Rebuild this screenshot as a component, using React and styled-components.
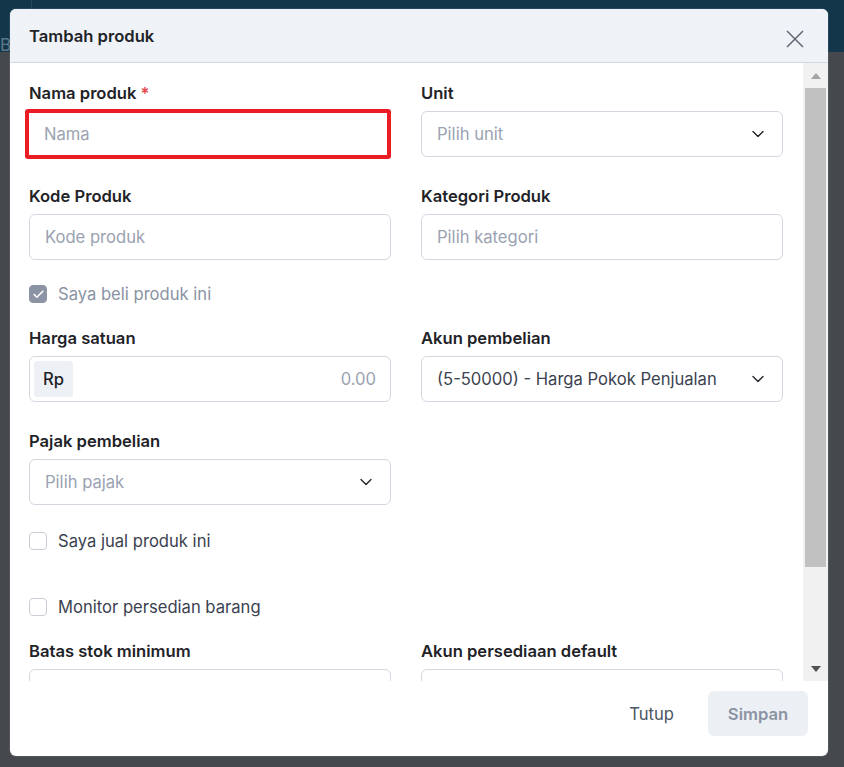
import React from "react";
import styled, { createGlobalStyle } from "styled-components";
import { ChevronDown, Check } from "lucide-react";

const GlobalStyle = createGlobalStyle`
  * { box-sizing: border-box; }
  html, body { margin: 0; padding: 0; }
  body {
    font-family: Inter, "Noto Sans", sans-serif;
    background: #45484c;
  }
`;

function App() {
  return (
    <Page>
      <GlobalStyle />
      <TopBar>
        <TopCell>Bi</TopCell>
      </TopBar>
      <Backdrop />

      <Modal>
        <Header>
          <Title>Tambah produk</Title>
          <CloseButton aria-label="close">
            <svg width="18" height="18" viewBox="0 0 18 18">
              <path d="M1 1L17 17M17 1L1 17" stroke="#5f6672" strokeWidth="1.5" fill="none" />
            </svg>
          </CloseButton>
        </Header>

        <Body>
          <Content>
            <Row>
              <Field>
                <Label>
                  Nama produk <Required>*</Required>
                </Label>
                <NameInput>Nama</NameInput>
              </Field>
              <Field>
                <Label>Unit</Label>
                <Select>
                  <span>Pilih unit</span>
                  <ChevronDown size={20} strokeWidth={1.6} color="#1f2328" />
                </Select>
              </Field>
            </Row>

            <Row $top={29}>
              <Field>
                <Label>Kode Produk</Label>
                <Input>Kode produk</Input>
              </Field>
              <Field>
                <Label>Kategori Produk</Label>
                <Input>Pilih kategori</Input>
              </Field>
            </Row>

            <CheckRow $top={24} $muted>
              <CheckBox $checked>
                <Check size={13} strokeWidth={3} color="#fff" />
              </CheckBox>
              Saya beli produk ini
            </CheckRow>

            <Row $top={24}>
              <Field>
                <Label>Harga satuan</Label>
                <PriceInput>
                  <Prefix>Rp</Prefix>
                  <span>0.00</span>
                </PriceInput>
              </Field>
              <Field>
                <Label>Akun pembelian</Label>
                <Select $filled>
                  <span>(5-50000) - Harga Pokok Penjualan</span>
                  <ChevronDown size={20} strokeWidth={1.6} color="#1f2328" />
                </Select>
              </Field>
            </Row>

            <Row $top={29}>
              <Field>
                <Label>Pajak pembelian</Label>
                <Select>
                  <span>Pilih pajak</span>
                  <ChevronDown size={20} strokeWidth={1.6} color="#1f2328" />
                </Select>
              </Field>
            </Row>

            <CheckRow $top={26}>
              <CheckBox />
              Saya jual produk ini
            </CheckRow>

            <CheckRow $top={46}>
              <CheckBox />
              Monitor persedian barang
            </CheckRow>

            <Row $top={24}>
              <Field>
                <Label>Batas stok minimum</Label>
                <Input />
              </Field>
              <Field>
                <Label>Akun persediaan default</Label>
                <Input />
              </Field>
            </Row>
          </Content>

          <ScrollBar>
            <ArrowButton>
              <ArrowUp />
            </ArrowButton>
            <Track>
              <Thumb />
            </Track>
            <ArrowButton>
              <ArrowDown />
            </ArrowButton>
          </ScrollBar>
        </Body>

        <Footer>
          <TextButton>Tutup</TextButton>
          <SaveButton>Simpan</SaveButton>
        </Footer>
      </Modal>
    </Page>
  );
}

export default App;

const Page = styled.div`
  position: relative;
  width: 844px;
  height: 767px;
  overflow: hidden;
  background: #45484c;
  display: flex;
  flex-direction: column;
`;

const TopBar = styled.div`
  height: 52px;
  background: #13364a;
  display: flex;
`;

const TopCell = styled.div`
  width: 32px;
  border-right: 1px solid #24495e;
  color: #5d7686;
  font-size: 17px;
  padding-top: 36px;
  line-height: 18px;
  overflow: hidden;
`;

const Backdrop = styled.div`
  flex: 1;
  background: #45484c;
`;

const Modal = styled.div`
  position: absolute;
  left: 10px;
  top: 9px;
  width: 818px;
  height: 747px;
  background: #fff;
  border-radius: 6px;
  overflow: hidden;
  display: flex;
  flex-direction: column;
  box-shadow: 0 0 0 1px rgba(255, 255, 255, 0.08);
`;

const Header = styled.div`
  height: 54px;
  flex-shrink: 0;
  display: flex;
  align-items: center;
  justify-content: space-between;
  padding: 0 24px 0 19px;
  background: #eff3f8;
  border-bottom: 1px solid #d3d9e1;
`;

const Title = styled.div`
  font-size: 16.6px;
  font-weight: 600;
  color: #1f2328;
`;

const CloseButton = styled.button`
  border: none;
  background: none;
  padding: 0;
  display: flex;
  margin-top: 6px;
`;

const Body = styled.div`
  flex: 1;
  display: flex;
  min-height: 0;
`;

const Content = styled.div`
  flex: 1;
  overflow: hidden;
  padding: 20px 20px 0 19px;
`;

const Row = styled.div`
  display: grid;
  grid-template-columns: 362px 362px;
  column-gap: 30px;
  margin-top: ${(p) => p.$top || 0}px;
`;

const Field = styled.div`
  display: flex;
  flex-direction: column;
`;

const Label = styled.div`
  font-size: 16.6px;
  line-height: 20px;
  font-weight: 600;
  color: #1f2328;
  margin-bottom: 8px;
`;

const Required = styled.span`
  color: #e5484d;
`;

const Input = styled.div`
  height: 46px;
  border: 1px solid #d3d8e0;
  border-radius: 6px;
  padding: 0 15px;
  display: flex;
  align-items: center;
  font-size: 16.6px;
  color: #9aa2b1;
`;

const NameInput = styled(Input)`
  height: 50px;
  margin: -2px 0 -2px -4px;
  border: 4px solid #ec1c24;
  border-radius: 3px;
  padding-left: 15px;
`;

const Select = styled(Input)`
  justify-content: space-between;
  padding-right: 14px;
  color: ${(p) => (p.$filled ? "#3b4250" : "#9aa2b1")};
`;

const PriceInput = styled(Input)`
  justify-content: space-between;
  padding: 4px 14px 4px 4px;
`;

const Prefix = styled.div`
  width: 39px;
  height: 36px;
  border-radius: 3px;
  background: #edf0f4;
  color: #1f2328;
  font-weight: 500;
  display: flex;
  align-items: center;
  padding-left: 9px;
`;

const CheckRow = styled.div`
  display: flex;
  align-items: center;
  gap: 11px;
  height: 20px;
  margin-top: ${(p) => p.$top || 0}px;
  font-size: 16.6px;
  color: ${(p) => (p.$muted ? "#8a93a3" : "#3b4250")};
`;

const CheckBox = styled.div`
  width: 18px;
  height: 18px;
  border-radius: 4px;
  display: flex;
  align-items: center;
  justify-content: center;
  background: ${(p) => (p.$checked ? "#8b93a4" : "#fff")};
  border: 1px solid ${(p) => (p.$checked ? "#8b93a4" : "#c9ced6")};
`;

const ScrollBar = styled.div`
  width: 25px;
  flex-shrink: 0;
  background: #f1f1f1;
  display: flex;
  flex-direction: column;
`;

const ArrowButton = styled.div`
  height: 25px;
  display: flex;
  align-items: center;
  justify-content: center;
`;

const ArrowUp = styled.div`
  width: 0;
  height: 0;
  border-left: 5px solid transparent;
  border-right: 5px solid transparent;
  border-bottom: 6px solid #a3a3a3;
`;

const ArrowDown = styled.div`
  width: 0;
  height: 0;
  border-left: 5px solid transparent;
  border-right: 5px solid transparent;
  border-top: 6px solid #505050;
`;

const Track = styled.div`
  flex: 1;
  padding: 0 2px;
`;

const Thumb = styled.div`
  height: 479px;
  background: #c1c1c1;
`;

const Footer = styled.div`
  height: 75px;
  flex-shrink: 0;
  display: flex;
  justify-content: flex-end;
  align-items: flex-start;
  gap: 22px;
  padding: 10px 20px 0;
`;

const TextButton = styled.button`
  height: 45px;
  border: none;
  background: none;
  padding: 0 12px;
  font-family: inherit;
  font-size: 16.6px;
  color: #4b5563;
`;

const SaveButton = styled.button`
  width: 100px;
  height: 45px;
  border: none;
  border-radius: 6px;
  background: #eceff3;
  font-family: inherit;
  font-size: 16.6px;
  font-weight: 600;
  color: #8a93a3;
`;
